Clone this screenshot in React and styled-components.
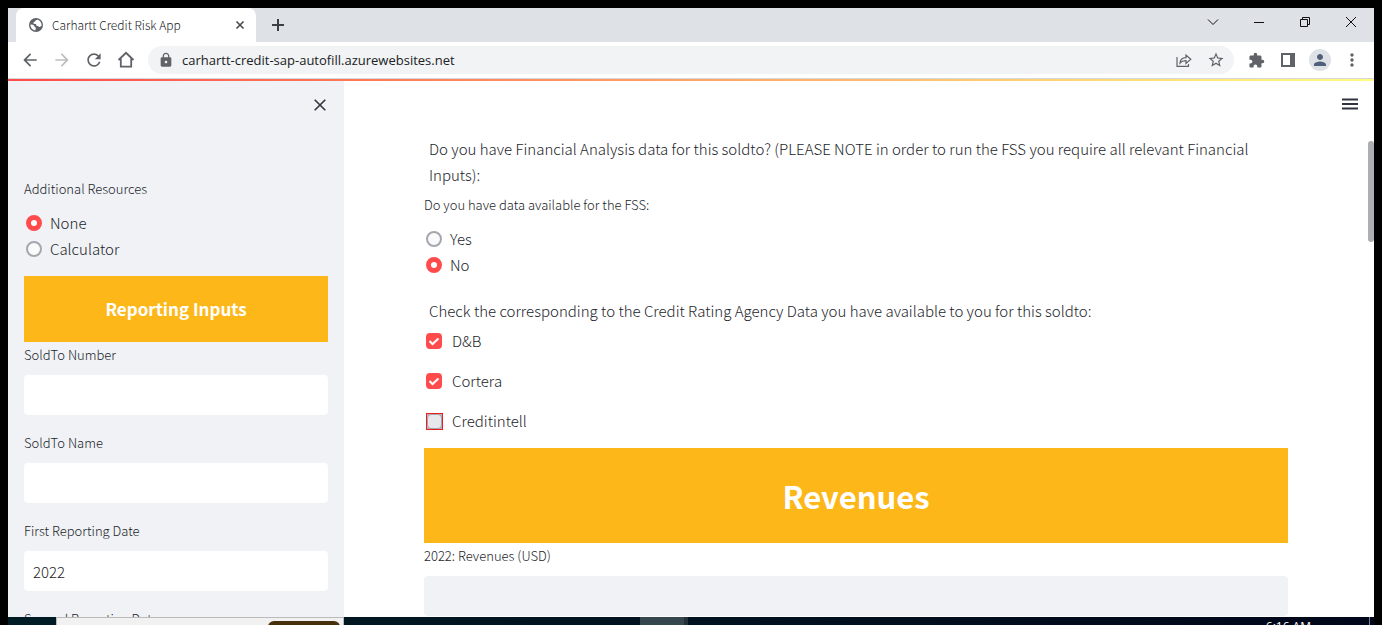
import React from "react";
import styled, { createGlobalStyle, css } from "styled-components";
import { MdArrowBack, MdArrowForward, MdRefresh, MdLock, MdStarOutline, MdExtension, MdPerson, MdMoreVert } from "react-icons/md";

const appFont = `"Noto Sans CJK SC", "Noto Sans", sans-serif`;
const chromeFont = `"Open Sans", "Noto Sans", sans-serif`;

const GlobalStyle = createGlobalStyle`
  *, *::before, *::after { box-sizing: border-box; }
  body { margin: 0; background: #000; color: #1c1e2a; font-family: ${appFont}; font-weight: 300; }
  button { border: 0; padding: 0; background: none; color: inherit; font: inherit; }
  h1, h2, p, fieldset { margin: 0; padding: 0; border: 0; }
`;

const Screen = styled.div`
  display: flex;
  flex-direction: column;
  height: 100vh;
  padding: 8px 8px 0;
  overflow: hidden;
`;

/* Browser frame */
const TabStrip = styled.div`
  flex: none;
  display: flex;
  align-items: stretch;
  height: 34px;
  padding-left: 8px;
  background: #dee1e6;
`;
const Tab = styled.div`
  display: flex;
  align-items: center;
  gap: 8px;
  width: 240px;
  padding: 0 8px 0 12px;
  border-radius: 8px 8px 0 0;
  background: #fff;
  color: #202326;
  font-size: 12px;
  line-height: 16px;
`;
const TabTitle = styled.span`
  flex: 1;
  white-space: nowrap;
`;
const IconButton = styled.button`
  display: flex;
  align-items: center;
  justify-content: center;
  flex: none;
  width: ${(p) => p.$w || 32}px;
  height: ${(p) => p.$h || 32}px;
  color: ${(p) => p.$color || "#5f6368"};
`;
const WindowControls = styled.div`
  display: flex;
  margin-left: auto;
`;
const Toolbar = styled.div`
  flex: none;
  display: flex;
  align-items: center;
  height: 37px;
  padding: 0 6px;
  border-bottom: 1px solid #d5d7db;
  background: #fff;
`;
const AddressBar = styled.div`
  flex: 1;
  display: flex;
  align-items: center;
  height: 28px;
  margin: 0 6px;
  padding: 0 2px 0 10px;
  border-radius: 14px;
  background: #f1f3f4;
  color: #5f6368;
`;
const Address = styled.input`
  flex: 1;
  min-width: 0;
  margin-left: 8px;
  padding: 0;
  border: 0;
  outline: 0;
  background: transparent;
  color: #202124;
  font-family: ${chromeFont};
  font-size: 13px;
`;
const Avatar = styled.span`
  display: flex;
  align-items: center;
  justify-content: center;
  width: 22px;
  height: 22px;
  border-radius: 50%;
  background: #dee1e6;
  color: #51607a;
`;

/* Page */
const Decoration = styled.div`
  flex: none;
  height: 2px;
  background: linear-gradient(90deg, #ff4b4b, #fffd80);
`;
const Page = styled.div`
  flex: 1;
  display: flex;
  min-height: 0;
  background: #fff;
`;
const Sidebar = styled.aside`
  flex: none;
  width: 336px;
  padding: 0 16px;
  overflow: hidden;
  background: #f0f2f6;
`;
const SidebarHeader = styled.div`
  display: flex;
  justify-content: flex-end;
  height: 97px;
  padding-top: 8px;
  margin-right: -8px;
`;
const Main = styled.main`
  position: relative;
  flex: 1;
  min-width: 0;
  padding: 55px 86px 0 80px;
  overflow: hidden;
`;
const MenuButton = styled(IconButton)`
  position: absolute;
  top: 7px;
  right: 8px;
`;
const ScrollThumb = styled.div`
  position: absolute;
  top: 60px;
  right: 0;
  width: 6px;
  height: 101px;
  border-radius: 3px;
  background: #adaeb3;
`;
const Paragraph = styled.p`
  padding: 0 16px 0 5px;
  font-size: 15px;
  line-height: 26px;
`;
const smallLabel = css`
  display: block;
  padding: 0;
  font-size: 13px;
  line-height: 22px;
`;
const FieldLabel = styled.label`
  ${smallLabel}
  margin-bottom: 9px;
`;
const Legend = styled.legend`
  ${smallLabel}
  margin-bottom: 10px;
`;
const Group = styled.fieldset`
  min-width: 0;
  margin: ${(p) => p.$margin};
`;
const Option = styled.label`
  display: flex;
  align-items: center;
  gap: ${(p) => p.$gap || 8}px;
  height: 26px;
  padding-left: 2px;
  font-size: 15px;
  line-height: 26px;
`;
const Radio = styled.input.attrs({ type: "radio" })`
  appearance: none;
  flex: none;
  width: 16px;
  height: 16px;
  margin: 0;
  border: 2px solid #a5a7ae;
  border-radius: 50%;
  background: #fafafb;
  &:checked { border: 5px solid #ff4b4b; background: #fff; }
`;
const CheckList = styled.div`
  display: flex;
  flex-direction: column;
  gap: 14px;
  padding: 4px 0 14px;
`;
const CheckBox = styled.input.attrs({ type: "checkbox" })`
  appearance: none;
  grid-area: 1 / 1;
  width: 16px;
  height: 16px;
  margin: 0;
  border: 2px solid #a2a5ac;
  border-radius: 4px;
  background: #e6e8ed;
  &:checked { border-color: #ff4b4b; background: #ff4b4b; }
`;
const CheckMark = styled.svg`
  grid-area: 1 / 1;
  width: 16px;
  height: 16px;
  pointer-events: none;
`;
const CheckCell = styled.span`
  display: grid;
  flex: none;
`;
const FlagFrame = styled.span`
  display: grid;
  margin-right: -1px;
  border: 1px solid #ee1c1c;
  background: #b4b6bc;
`;
const FlaggedBox = styled(CheckBox)`
  width: 15px;
  height: 15px;
  border-width: 1px;
`;
const Banner = styled.div`
  display: flex;
  align-items: center;
  justify-content: center;
  height: ${(p) => p.$height}px;
  margin-bottom: 2px;
  background: #fdb719;
  color: #fff;
`;
const SideTitle = styled.h2`
  font-size: 17px;
  font-weight: 700;
  line-height: 24px;
`;
const MainTitle = styled.h1`
  font-size: 31px;
  font-weight: 700;
  line-height: 40px;
`;
const Field = styled.div`
  margin-bottom: 17px;
`;
const TextInput = styled.input`
  display: block;
  width: 100%;
  height: 40px;
  padding: 0 9px;
  border: 0;
  border-radius: 4px;
  outline: 0;
  background: ${(p) => (p.$tinted ? "#f0f2f6" : "#fff")};
  color: inherit;
  font-family: ${appFont};
  font-size: 15px;
  font-weight: inherit;
`;

/* Desktop taskbar */
const Taskbar = styled.div`
  flex: none;
  display: flex;
  height: 8px;
  overflow: hidden;
  padding-left: 48px;
  background: linear-gradient(90deg, #001c24, #00071a);
`;
const TaskSearch = styled.div`
  display: flex;
  justify-content: flex-end;
  width: 288px;
  height: 40px;
  padding: 3px 3px 0;
  border: 1px solid #bababa;
  background: #f1f1f1;
`;
const SearchArt = styled.div`
  width: 72px;
  height: 32px;
  border-radius: 6px;
  background: #46310b;
`;
const TaskItem = styled.div`
  width: 48px;
  height: 40px;
  margin-left: 296px;
  border-right: 4px solid #253138;
  background: #35464e;
`;
const Clock = styled.time`
  height: 40px;
  margin-left: auto;
  margin-right: 4px;
  padding: 2px 58px 0 0;
  border-right: 1px solid #7a808a;
  color: #fff;
  font-family: ${chromeFont};
  font-size: 12px;
  font-weight: 400;
  line-height: 16px;
  white-space: nowrap;
`;

const Line = ({ size, width = 1, d }) => (
  <svg width={size} height={size} viewBox={`0 0 ${size} ${size}`} fill="none" stroke="currentColor" strokeWidth={width} aria-hidden="true">
    <path d={d} />
  </svg>
);

const Globe = () => (
  <svg width="16" height="16" viewBox="0 0 16 16" aria-hidden="true">
    <circle cx="8" cy="8" r="7" fill="#5f6368" />
    <path fill="#fff" d="M9.300 2.600C8.800 3.600 7.300 3.300 7 4.300c-.2.800-1.600.5-1.600 1.700 0 .8.900 1 1.800.9.900-.1 1.100.6 1.100 1.300 0 .5.600.8 1.300.8.900 0 1 .9 1.800.9.800 0 1.200-.8 2.200-.8.300-2.700-1.300-5.500-4.300-6.500zM2.500 7.600c1.300 0 2.900.3 3.600 1.100.5.600.2 1.200 1 1.500.8.3 1 .8.600 1.500-.3.600-.2 1.100-.2 1.800-2.900-.2-5.200-2.700-5-5.900z" />
  </svg>
);

function Check({ name, defaultChecked, flagged }) {
  return (
    <Option $gap={10}>
      {flagged ? (
        <FlagFrame><FlaggedBox defaultChecked={defaultChecked} /></FlagFrame>
      ) : (
        <CheckCell>
          <CheckBox defaultChecked={defaultChecked} />
          <CheckMark viewBox="0 0 16 16" fill="none" stroke="#fff" strokeWidth="2" aria-hidden="true">
            <path d="M3.500 8l3 3 6-5.500" />
          </CheckMark>
        </CheckCell>
      )}
      {name}
    </Option>
  );
}

function TextField({ id, label, value, tinted }) {
  return (
    <Field>
      <FieldLabel htmlFor={id}>{label}</FieldLabel>
      <TextInput id={id} defaultValue={value} $tinted={tinted} />
    </Field>
  );
}

export default function App() {
  return (
    <Screen>
      <GlobalStyle />
      <TabStrip>
        <Tab>
          <Globe />
          <TabTitle>Carhartt Credit Risk App</TabTitle>
          <IconButton $w={16} $h={16} $color="#45494d" aria-label="Close tab"><Line size={16} width={1.6} d="M4.500 4.500l7 7M11.500 4.500l-7 7" /></IconButton>
        </Tab>
        <IconButton $w={44} $h={34} $color="#3c4043" aria-label="New tab"><Line size={16} width={2} d="M8 2v12M2 8h12" /></IconButton>
        <WindowControls>
          <IconButton $w={46} $h={28} $color="#111" aria-label="Search tabs"><Line size={12} d="M1 3.500l5 5 5-5" /></IconButton>
          <IconButton $w={46} $h={28} $color="#111" aria-label="Minimise"><Line size={10} d="M0 5.500h10" /></IconButton>
          <IconButton $w={46} $h={28} $color="#111" aria-label="Restore"><Line size={10} d="M.5 2.500h7v7h-7zM2.500 2.500v-2h7v7h-2" /></IconButton>
          <IconButton $w={46} $h={28} $color="#111" aria-label="Close window"><Line size={10} d="M0 0l10 10M10 0L0 10" /></IconButton>
        </WindowControls>
      </TabStrip>
      <Toolbar>
        <IconButton aria-label="Back"><MdArrowBack size={20} /></IconButton>
        <IconButton $color="#bcbec1" aria-label="Forward"><MdArrowForward size={20} /></IconButton>
        <IconButton aria-label="Reload"><MdRefresh size={20} /></IconButton>
        <IconButton aria-label="Home"><Line size={18} width={1.800} d="M1.500 9L9 1.800 16.500 9M3.800 7.500v8.200h10.400V7.500" /></IconButton>
        <AddressBar>
          <MdLock size={16} />
          <Address aria-label="Address" defaultValue="carhartt-credit-sap-autofill.azurewebsites.net" />
          <IconButton aria-label="Share">
            <Line size={16} width={1.200} d="M1 5v9.400h11.500V12M4 11c.3-3.500 2.500-5.300 6-5.400V3l4.800 4.300L10 11.400V8.700C7.500 8.600 5.500 9.300 4 11z" />
          </IconButton>
          <IconButton aria-label="Bookmark"><MdStarOutline size={18} /></IconButton>
        </AddressBar>
        <IconButton aria-label="Extensions"><MdExtension size={17} /></IconButton>
        <IconButton aria-label="Side panel">
          <svg width="14" height="14" viewBox="0 0 14 14" aria-hidden="true"><path fill="currentColor" fillRule="evenodd" d="M0 0h14v14H0zM2 2v10h7V2z" /></svg>
        </IconButton>
        <IconButton aria-label="Profile"><Avatar><MdPerson size={18} /></Avatar></IconButton>
        <IconButton aria-label="Browser menu"><MdMoreVert size={20} /></IconButton>
      </Toolbar>
      <Decoration />
      <Page>
        <Sidebar>
          <SidebarHeader>
            <IconButton $color="#31333f" aria-label="Close sidebar"><Line size={12} width={1.600} d="M.7.7l10.600 10.600M11.300.7L.7 11.300" /></IconButton>
          </SidebarHeader>
          <Group $margin="0 0 14px">
            <Legend>Additional Resources</Legend>
            <Option><Radio name="resource" defaultChecked />None</Option>
            <Option><Radio name="resource" />Calculator</Option>
          </Group>
          <Banner $height={66}><SideTitle>Reporting Inputs</SideTitle></Banner>
          <TextField id="soldto-number" label="SoldTo Number" />
          <TextField id="soldto-name" label="SoldTo Name" />
          <TextField id="first-date" label="First Reporting Date" value="2022" />
          <TextField id="second-date" label="Second Reporting Date" />
        </Sidebar>
        <Main>
          <MenuButton $color="#31333f" aria-label="Menu"><Line size={16} width={2} d="M0 3.500h16M0 8h16M0 12.500h16" /></MenuButton>
          <Paragraph>
            Do you have Financial Analysis data for this soldto? (PLEASE NOTE in order to run the FSS you require all relevant Financial Inputs):
          </Paragraph>
          <Group $margin="6px 0 20px">
            <Legend>Do you have data available for the FSS:</Legend>
            <Option><Radio name="fss" />Yes</Option>
            <Option><Radio name="fss" defaultChecked />No</Option>
          </Group>
          <Paragraph>Check the corresponding to the Credit Rating Agency Data you have available to you for this soldto:</Paragraph>
          <CheckList>
            <Check name="D&B" defaultChecked />
            <Check name="Cortera" defaultChecked />
            <Check name="Creditintell" flagged />
          </CheckList>
          <Banner $height={95}><MainTitle>Revenues</MainTitle></Banner>
          <TextField id="revenues" label="2022: Revenues (USD)" tinted />
          <ScrollThumb />
        </Main>
      </Page>
      <Taskbar>
        <TaskSearch><SearchArt /></TaskSearch>
        <TaskItem />
        <Clock>6:16 AM</Clock>
      </Taskbar>
    </Screen>
  );
}
